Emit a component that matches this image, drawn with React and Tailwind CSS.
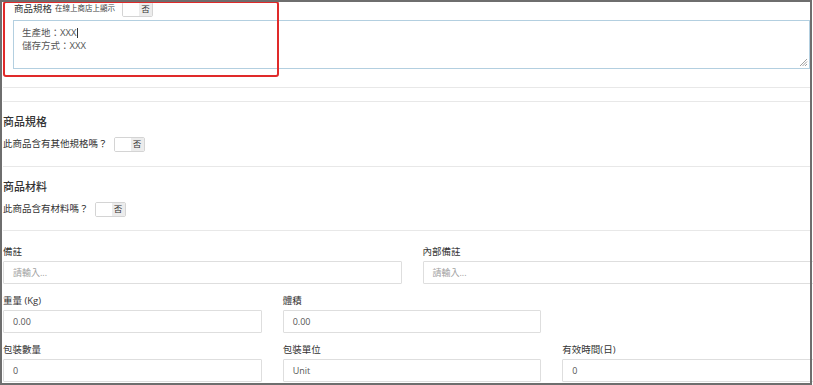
import React from 'react';

const font = { fontFamily: '"Open Sans", "Noto Sans CJK TC", sans-serif' };

function Toggle({ className = '' }) {
  return (
    <span className={`inline-flex w-[31px] h-[15px] border border-[#d4d4d4] rounded-[2px] overflow-hidden bg-white ${className}`}>
      <span className="w-[16px] h-full bg-white" />
      <span className="flex-1 h-full bg-[#ececec] flex items-center justify-center text-[8.5px] leading-none text-[#333]">否</span>
    </span>
  );
}

function Field({ label, value, placeholder }) {
  return (
    <div className="flex flex-col">
      <div className="h-[14px] flex items-center text-[9.5px] text-[#333] leading-none">{label}</div>
      <div className="mt-[2px] h-[23px] border border-[#dedede] rounded-[1px] flex items-center pl-[9px] text-[9px] leading-none">
        {value ? <span className="text-[#555]">{value}</span> : <span className="text-[#a0a0a0]">{placeholder}</span>}
      </div>
    </div>
  );
}

export default function App() {
  return (
    <div className="relative w-[813px] h-[385px] overflow-hidden bg-white" style={font}>
      <div className="w-[818px] pl-[3px]">
        {/* top spec block */}
        <div className="h-[18px] flex items-center pl-[11px]">
          <span className="text-[9.5px] text-[#333] leading-none">商品規格</span>
          <span className="ml-[3px] text-[7.5px] text-[#444] leading-none">在線上商店上顯示</span>
          <Toggle className="ml-[7px] mt-[1px]" />
        </div>
        <div className="ml-[10px] mt-[2px] w-[797px] h-[49px] border border-[#b3cfe0] pl-[8px] pt-[5px] text-[9.5px] leading-[13px] text-[#555] relative">
          <div>生產地：XXX<span className="inline-block w-px h-[10px] bg-[#333] align-middle ml-px" /></div>
          <div>儲存方式：XXX</div>
          <svg className="absolute right-[1px] bottom-[1px]" width="9" height="9" viewBox="0 0 9 9">
            <path d="M8 1L1 8M8 3.5L3.5 8M8 6L6 8" stroke="#888" strokeWidth="0.8" />
          </svg>
        </div>
        <div className="h-[19px] border-b border-[#e8e8e8] w-[807px]" />
        <div className="h-[14px] border-b border-[#e8e8e8] w-[807px]" />

        {/* spec section */}
        <div className="pt-[9px] pb-[14px] border-b border-[#e8e8e8] w-[807px]">
          <div className="h-[20px] flex items-center text-[11px] font-medium text-[#333] leading-none">商品規格</div>
          <div className="mt-[5px] h-[16px] flex items-center">
            <span className="text-[9.5px] text-[#333] leading-none">此商品含有其他規格嗎？</span>
            <Toggle className="ml-[6px]" />
          </div>
        </div>

        {/* material section */}
        <div className="pt-[9px] pb-[13px] border-b border-[#e8e8e8] w-[807px]">
          <div className="h-[20px] flex items-center text-[11px] font-medium text-[#333] leading-none">商品材料</div>
          <div className="mt-[5px] h-[16px] flex items-center">
            <span className="text-[9.5px] text-[#333] leading-none">此商品含有材料嗎？</span>
            <Toggle className="ml-[6px]" />
          </div>
        </div>

        {/* fields */}
        <div className="pt-[14px] w-[818px]">
          <div className="grid grid-cols-2 gap-x-[21px]">
            <Field label="備註" placeholder="請輸入..." />
            <Field label="內部備註" placeholder="請輸入..." />
          </div>
          <div className="mt-[10px] grid grid-cols-3 gap-x-[21px]">
            <Field label="重量 (Kg)" value="0.00" />
            <Field label="體積" value="0.00" />
          </div>
          <div className="mt-[10px] grid grid-cols-3 gap-x-[21px]">
            <Field label="包裝數量" value="0" />
            <Field label="包裝單位" value="Unit" />
            <Field label="有效時間(日)" value="0" />
          </div>
        </div>
      </div>

      {/* highlight box */}
      <div className="absolute left-[3px] top-[1px] w-[276px] h-[76px] border-2 border-[#e02a2a] rounded-[3px] pointer-events-none" />
      {/* screenshot frame */}
      <div className="absolute left-0 top-0 right-[1px] bottom-0 border-2 border-[#6e6e6e] pointer-events-none" />
    </div>
  );
}
